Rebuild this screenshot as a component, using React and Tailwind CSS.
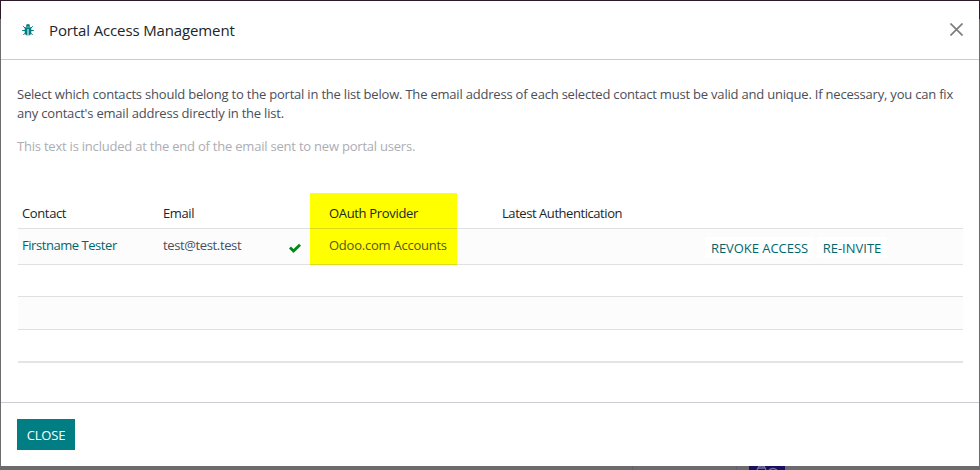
const emptyRows = [
  "h-8 border-b border-[#dee0e3]",
  "h-[33px] border-b border-[#dee0e3] bg-[#fcfcfc]",
  "h-[33px] border-b-2 border-[#e3e4e8]",
];

function BugIcon() {
  return (
    <svg className="size-3" viewBox="0 0 12 12" fill="none">
      <path d="M4 2.8V2a2 2 0 0 1 4 0v.8Z" fill="#017e84" />
      <path d="M2.7 3.3H9.3V8.3Q9.3 11.3 6.5 11.5V5H5.5V11.5Q2.7 11.3 2.7 8.3Z" fill="#017e84" />
      <path d="M5.5 5H6.5V11H5.5Z" fill="#8fc4c7" />
      <path d="M1.2 2.2L3.2 4.1M10.8 2.2L8.8 4.1M0.2 6.5H3M9 6.5H11.8M3.3 9L1.3 11M8.7 9L10.7 11" stroke="#017e84" strokeWidth="1" />
    </svg>
  );
}

function CheckIcon() {
  return (
    <svg className="mt-[7px] h-[10px] w-3" viewBox="0 0 12 10" fill="none" stroke="#008818" strokeWidth="2.8">
      <path d="M1 4.5L4.5 8L11 1.7" />
    </svg>
  );
}

function Header() {
  return (
    <header className="flex h-[59px] items-center border-b border-[#c9ccd2] pl-[21px] pr-4">
      <BugIcon />
      <h1 className="ml-[15px] text-[15px] leading-6 tracking-[-0.13px] text-[#212529]">Portal Access Management</h1>
      <svg className="mb-px ml-auto size-[13px]" viewBox="0 0 14 14" fill="none" stroke="#7d7d7d" strokeWidth="1.8">
        <path d="M0.5 0.5L13.5 13.5M13.5 0.5L0.5 13.5" />
      </svg>
    </header>
  );
}

function ContactTable() {
  return (
    <div className="ml-[17px] mr-4 mt-[37px] text-[#4b4e59]">
      <div className="flex h-9 border-b border-[#dee0e3] text-[#212529]">
        <div className="w-[141px] pl-1 pt-[11px] tracking-[-0.37px]">Contact</div>
        <div className="w-[151px] pl-1 pt-[11px] tracking-[-0.38px]">Email</div>
        <div className="-mb-px w-[147px] border-b border-[#dcdc1c] bg-[#ffff00] pl-[19px] pt-[11px] tracking-[-0.33px]">OAuth Provider</div>
        <div className="pl-[45px] pt-[11px] tracking-[-0.44px]">Latest Authentication</div>
      </div>
      <div className="flex h-9 border-b border-[#dee0e3] bg-[#fcfcfc]">
        <div className="w-[141px] pl-1 pt-[7px] tracking-[-0.45px] text-[#01666b]">Firstname Tester</div>
        <div className="flex w-[151px] justify-between pl-1 pr-[9px] pt-[7px] tracking-[-0.37px]">
          test@test.test
          <CheckIcon />
        </div>
        <div className="-mb-px w-[147px] border-b border-[#dcdc1c] bg-[#ffff00] pl-[19px] pt-[7px] tracking-[-0.24px] text-[#52571d]">Odoo.com Accounts</div>
        <div className="ml-[248px] mt-2 flex h-[21px] gap-1 leading-[23px] text-[#01666b]">
          <button className="w-[108px] bg-white pl-px tracking-[-0.05px]">REVOKE ACCESS</button>
          <button className="w-[70px] bg-white">RE-INVITE</button>
        </div>
      </div>
      {emptyRows.map((row, i) => (
        <div key={i} className={row} />
      ))}
    </div>
  );
}

export default function App() {
  return (
    <div className="flex h-[470px] w-[980px] flex-col overflow-hidden bg-[linear-gradient(#2b1b28_19px,#6b6b6d_19px)] pl-px pt-px font-['Open_Sans','Noto_Sans',sans-serif] text-[13px] leading-[19px]">
      <main className="flex h-[465px] w-[978px] flex-col bg-white">
        <Header />
        <section className="px-4 pt-[25px] text-[#4b4e59]">
          <p className="whitespace-nowrap tracking-[-0.203px]">
            Select which contacts should belong to the portal in the list below. The email address of each selected contact must be valid and unique. If necessary, you can fix
            <br />
            any contact's email address directly in the list.
          </p>
          <p className="mt-[14px] tracking-[-0.215px] text-[#adadb3]">This text is included at the end of the email sent to new portal users.</p>
        </section>
        <ContactTable />
        <footer className="mt-auto h-16 border-t border-[#c9ccd2] px-4 pt-4">
          <button className="h-[31px] w-[58px] bg-[#017e84] pt-[2px] tracking-[-0.2px] text-white">CLOSE</button>
        </footer>
      </main>
      <div className="flex h-1">
        <div className="ml-[631px] w-[105px] border-x border-[#606168] bg-[#6c6b70]" />
        <div className="ml-3 flex h-1 w-9 items-start justify-center overflow-hidden bg-[#17125f]">
          <svg className="h-1 w-6" viewBox="0 0 24 4" fill="none" stroke="#77749b" strokeWidth="1.3">
            <path d="M2 4L4 0H9L11 4M3 2H10M14 4Q18 1 22 4" />
          </svg>
        </div>
      </div>
    </div>
  );
}
